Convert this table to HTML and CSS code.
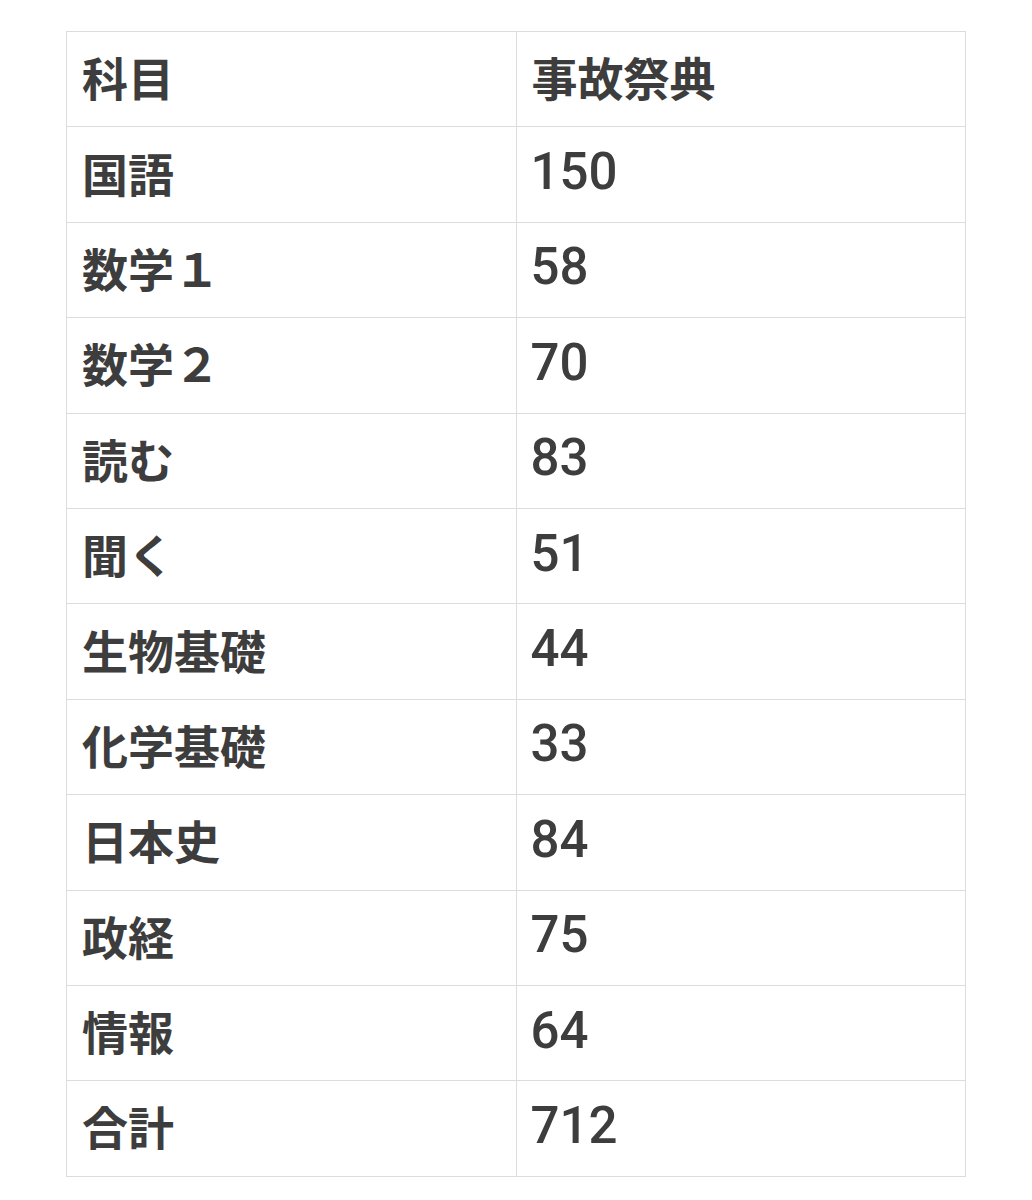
FILE: index.html
```html
<!DOCTYPE html>
<html lang="ja">
<head>
<meta charset="utf-8">
<link rel="stylesheet" href="styles.css">
</head>
<body>
<table class="score">
  <tr><td>科目</td><td>事故祭典</td></tr>
  <tr><td>国語</td><td class="num">150</td></tr>
  <tr><td>数学１</td><td class="num">58</td></tr>
  <tr><td>数学２</td><td class="num">70</td></tr>
  <tr><td>読む</td><td class="num">83</td></tr>
  <tr><td>聞く</td><td class="num">51</td></tr>
  <tr><td>生物基礎</td><td class="num">44</td></tr>
  <tr><td>化学基礎</td><td class="num">33</td></tr>
  <tr><td>日本史</td><td class="num">84</td></tr>
  <tr><td>政経</td><td class="num">75</td></tr>
  <tr><td>情報</td><td class="num">64</td></tr>
  <tr><td>合計</td><td class="num">712</td></tr>
</table>
</body>
</html>
```
FILE: styles.css
```css
html, body {
  margin: 0;
  padding: 0;
  background: #ffffff;
}
body {
  padding: 31px 0 0 66px;
}
.score {
  border-collapse: collapse;
  width: 900px;
  table-layout: fixed;
  font-family: "Noto Sans CJK JP", sans-serif;
  font-weight: 700;
  font-size: 46px;
  color: #3d3d3d;
}
.score td {
  border: 1px solid #dcdce0;
  height: 95.4px;
  padding: 0 15px 6px;
  box-sizing: border-box;
  vertical-align: middle;
  line-height: 1;
}
.score td.num {
  font-family: "Roboto", "Liberation Sans", sans-serif;
  font-weight: 500;
  font-size: 51px;
  padding-left: 14px;
}
```
